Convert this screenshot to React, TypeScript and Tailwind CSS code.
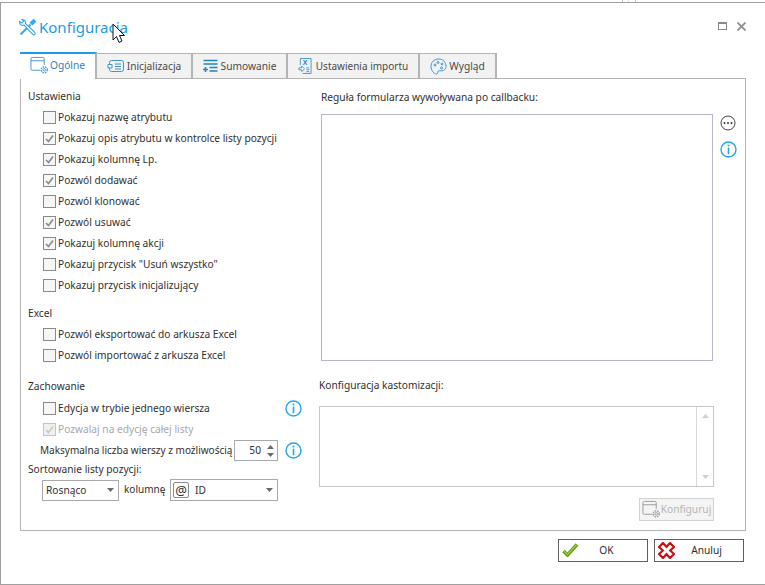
import React from "react";

const font = { fontFamily: '"Noto Sans", sans-serif' };

function Check({ checked, disabled }: { checked?: boolean; disabled?: boolean }) {
  return (
    <span className={`w-[13px] h-[13px] border shrink-0 flex items-center justify-center ${disabled ? "border-[#c4c4c4] bg-[#f0f0f0]" : "border-[#8a8a8a] bg-[#f6f6f6]"}`}>
      {checked && (
        <svg width="11" height="11" viewBox="0 0 11 11">
          <path d="M2 6 L4.5 8.5 L9 2.5" fill="none" stroke={disabled ? "#c8c8c8" : "#8c8c8c"} strokeWidth="1.7" />
        </svg>
      )}
    </span>
  );
}

function Row({ label, checked, disabled }: { label: string; checked?: boolean; disabled?: boolean }) {
  return (
    <div className={`h-[21px] flex items-center gap-[2px] pl-[15px] whitespace-nowrap ${disabled ? "text-[#a8a8a8]" : "text-[#303030]"}`}>
      <Check checked={checked} disabled={disabled} />
      <span>{label}</span>
    </div>
  );
}

function Info({ className = "" }: { className?: string }) {
  return (
    <svg width="17" height="17" viewBox="0 0 17 17" className={`shrink-0 ${className}`}>
      <circle cx="8.5" cy="8.5" r="7.5" fill="none" stroke="#22a7ee" strokeWidth="1.4" />
      <rect x="7.6" y="3.6" width="1.8" height="1.8" fill="#22a7ee" />
      <rect x="7.7" y="6.6" width="1.6" height="6.6" fill="#22a7ee" />
    </svg>
  );
}

function Caret({ color = "#6b6b6b" }: { color?: string }) {
  return (
    <svg width="7" height="4" viewBox="0 0 7 4">
      <path d="M0 0H7L3.5 4Z" fill={color} />
    </svg>
  );
}

function GearWindow({ color = "#4b93c8" }: { color?: string }) {
  return (
    <svg width="19" height="19" viewBox="0 0 20 19" fill="none" stroke={color} strokeWidth="1">
      <path d="M11 14.5H2.5a1.5 1.5 0 0 1-1.5-1.5V2.5A1.5 1.5 0 0 1 2.5 1h11A1.5 1.5 0 0 1 15 2.5V9" />
      <path d="M1 4.5H15" />
      <circle cx="15" cy="14" r="1.3" />
      <circle cx="15" cy="14" r="3.2" strokeDasharray="1.6 1" strokeWidth="1.4" />
    </svg>
  );
}

function Tab({ icon, label, active, w, gap = "gap-[2px]", text = "" }: { icon: React.ReactNode; label: string; active?: boolean; w: string; gap?: string; text?: string }) {
  return (
    <div
      className={`${w} ${gap} flex items-center justify-center border-r-2 ${
        active
          ? "h-[27px] bg-white border-t-2 border-t-[#1e9be8] border-r-[#b4b4b4] -mb-[1px] text-[#3a7fb0] z-10 pb-[2px]"
          : "h-[25px] bg-[#f2f2f2] border-t border-t-[#b4b4b4] text-[#4a4a4a] border-r-[#b4b4b4]"
      }`}
    >
      {icon}
      <span className={text}>{label}</span>
    </div>
  );
}

export default function App() {
  return (
    <div className="w-[765px] h-[585px] bg-white relative overflow-hidden text-[10.2px] leading-[15px]" style={font}>
      <div className="h-[3px] border-b border-[#a0a0a0] relative">
        <div className="absolute left-[622px] top-0 h-[2px] w-[14px] border-x border-[#c4c4c4]" />
        <div className="absolute left-[628px] top-0 h-[2px] w-[1px] bg-[#e0e0e0]" />
      </div>
      <div className="h-[582px] border-l border-b border-[#a0a0a0] pl-[19px] flex flex-col">
        <div className="h-[49px] flex items-center pb-[1px]">
          <svg width="19" height="19" viewBox="0 0 19 19" fill="none" stroke="#3aa9ec" strokeWidth="1.1" className="-ml-[2px]">
            <path d="M2.500 16.500 L12.500 6.500" strokeWidth="2.200" />
            <path d="M15.500 1.500 L17.500 3.500 L14.500 6.800 L12.200 4.800 Z" fill="#3aa9ec" />
            <path d="M1.500 3.500 a3.200 3.200 0 0 0 4.500 3.500 L14.800 16.300 a1.400 1.400 0 0 0 2-2 L7.500 5.500 a3.200 3.200 0 0 0-3.500-4 L5.500 3.300 L4 5 Z" fill="#fff" />
          </svg>
          <span className="text-[15px] leading-[24px] text-[#1d9be6] ml-[2px]">Konfiguracja</span>
          <div className="ml-auto mr-[19px] -mt-[2px] flex items-center gap-[10px]">
            <span className="w-[9px] h-[8px] border border-[#8a8a8a] border-t-2 block" />
            <svg width="9" height="9" viewBox="0 0 9 9"><path d="M0.5 0.5L8.5 8.5M8.5 0.5L0.5 8.5" stroke="#8a8a8a" strokeWidth="1.6" /></svg>
          </div>
        </div>
        <div className="flex items-end h-[26px] relative">
          <Tab w="w-[77px]" gap="gap-[1px]" active label="Ogólne" icon={<GearWindow />} />
          <Tab w="w-[96px]" label="Inicjalizacja" icon={
            <svg width="18" height="14" viewBox="0 0 18 14" fill="none" stroke="#3f94cc"><rect x="2.500" y="1.500" width="14" height="11" rx="2" /><path d="M8 5H14M8 7.500H14M8 10H14M1 5.500H5V9H1Z" fill="#fff" /></svg>
          } />
          <Tab w="w-[95px]" gap="gap-[3px]" label="Sumowanie" icon={
            <svg width="15" height="14" viewBox="0 0 15 14" fill="none" stroke="#1f86c8" strokeWidth="1.6"><path d="M0.500 1.500H14.500M0.500 5H14.500M6.500 8.500H14.500M6.500 12H14.500M0 10.500H5M2.500 8V13" /></svg>
          } />
          <Tab w="w-[132px]" gap="gap-[4px]" text="text-[10px]" label="Ustawienia importu" icon={
            <svg width="14" height="18" viewBox="0 0 15 18" fill="none" stroke="#3f94cc"><path d="M2.500 8V1H14V17H5" /><path d="M1 11H4V9L7 12L4 15V13H1Z" fill="#fff" /><path d="M9 11H12M9 13H12M9 15H12" /><text x="5" y="7.500" fontSize="7.500" fontWeight="700" fill="#2f7fb8" stroke="none" fontFamily="Liberation Sans">X</text></svg>
          } />
          <Tab w="w-[77px]" label="Wygląd" icon={
            <svg width="17" height="17" viewBox="0 0 17 17" fill="none" stroke="#3f94cc"><path d="M8.500 1C4 1 1 4.200 1 8.500c0 4 3 7.500 5.500 7.500 1.500 0 1-2 1.800-3 1-1 3 .6 5.200-.6C15.400 11.400 16 10 16 8.500 16 4 13 1 8.500 1Z" /><circle cx="5" cy="7" r="1" /><circle cx="8" cy="4.500" r="1" /><circle cx="12" cy="6" r="1" /><circle cx="11.500" cy="10" r="1" /></svg>
          } />
        </div>
        <div className="w-[726px] h-[453px] border border-[#b4b4b4] flex">
          <div className="w-[299px] pl-[7px] pr-[18px] pt-[10px] shrink-0">
            <div className="h-[17px] text-[#303030]">Ustawienia</div>
            <div className="mt-[1px]">
              <Row label="Pokazuj nazwę atrybutu" />
              <Row label="Pokazuj opis atrybutu w kontrolce listy pozycji" checked />
              <Row label="Pokazuj kolumnę Lp." checked />
              <Row label="Pozwól dodawać" checked />
              <Row label="Pozwól klonować" />
              <Row label="Pozwól usuwać" checked />
              <Row label="Pokazuj kolumnę akcji" checked />
              <Row label={'Pokazuj przycisk "Usuń wszystko"'} />
              <Row label="Pokazuj przycisk inicjalizujący" />
            </div>
            <div className="mt-[10px] h-[17px] text-[#303030]">Excel</div>
            <div className="mt-[1px]">
              <Row label="Pozwól eksportować do arkusza Excel" />
              <Row label="Pozwól importować z arkusza Excel" />
            </div>
            <div className="mt-[13px] h-[17px] text-[#303030]">Zachowanie</div>
            <div className="mt-[2px] flex items-center justify-between">
              <Row label="Edycja w trybie jednego wiersza" />
              <Info />
            </div>
            <Row label="Pozwalaj na edycję całej listy" checked disabled />
            <div className="h-[23px] -mt-[1px] flex items-center pl-[12px] text-[#303030] whitespace-nowrap">
              <span className="w-[194px] text-[10px]">Maksymalna liczba wierszy z możliwością</span>
              <div className="w-[44px] h-[21px] border border-[#a9a9a9] flex items-center justify-end shrink-0">
                <span className="mr-[6px]">50</span>
                <div className="flex flex-col gap-[4px] mr-[3px]">
                  <div className="rotate-180 leading-[0]"><Caret /></div>
                  <div className="leading-[0]"><Caret /></div>
                </div>
              </div>
              <Info className="ml-auto" />
            </div>
            <div className="h-[17px] text-[#303030]">Sortowanie listy pozycji:</div>
            <div className="flex items-center pl-[14px] text-[#303030]">
              <div className="w-[77px] h-[21px] border border-[#a9a9a9] flex items-center justify-between px-[3px]">
                <span>Rosnąco</span>
                <span className="mr-[1px]"><Caret /></span>
              </div>
              <span className="ml-[5px] mb-[2px] w-[46px] text-[10px]">kolumnę</span>
              <div className="w-[108px] h-[22px] border border-[#a9a9a9] flex items-center px-[2px]">
                <span className="w-[16px] h-[16px] border border-[#8c8c8c] rounded-[2px] flex items-center justify-center text-[13px]">@</span>
                <span className="ml-[6px]">ID</span>
                <span className="ml-auto mr-[2px]"><Caret /></span>
              </div>
            </div>
          </div>
          <div className="flex-1 pt-[11px] text-[#303030]">
            <div className="h-[17px] pl-[1px]">Reguła formularza wywoływana po callbacku:</div>
            <div className="flex mt-[7px]">
              <div className="w-[392px] h-[247px] border border-[#b7b7c8] ml-[1px]" />
              <div className="ml-[7px] pt-[1px] flex flex-col gap-[10px]">
                <svg width="16" height="16" viewBox="0 0 16 16">
                  <circle cx="8" cy="8" r="7" fill="none" stroke="#444" strokeWidth="1" />
                  <circle cx="4.500" cy="8" r="1" fill="#333" /><circle cx="8" cy="8" r="1" fill="#333" /><circle cx="11.500" cy="8" r="1" fill="#333" />
                </svg>
                <Info />
              </div>
            </div>
            <div className="h-[17px] mt-[17px] -ml-[1px]">Konfiguracja kastomizacji:</div>
            <div className="w-[395px] h-[81px] mt-[11px] -ml-[1px] border border-[#c6c6c6] flex justify-end">
              <div className="w-[17px] border-l border-[#d8d8d8] flex flex-col items-center justify-between py-[7px]">
                <div className="rotate-180 leading-[0]"><Caret color="#d0d0d0" /></div>
                <div className="leading-[0]"><Caret color="#d0d0d0" /></div>
              </div>
            </div>
            <div className="w-[395px] -ml-[1px] mt-[11px] flex justify-end">
              <div className="w-[75px] h-[23px] border border-[#d2d2d2] bg-[#f4f4f4] text-[#b4b4b4] flex items-center justify-center">
                <GearWindow color="#9a9a9a" />
                <span>Konfiguruj</span>
              </div>
            </div>
          </div>
        </div>
        <div className="flex justify-end gap-[6px] mt-[8px] w-[726px]">
          <div className="w-[90px] h-[23px] border border-[#5f5f5f] flex items-center relative text-[#303030]">
            <svg width="17" height="15" viewBox="0 0 17 15" className="absolute left-[3px] top-[2px]"><path d="M1.500 9 L5.500 13 L15 2.500" fill="none" stroke="#6aa512" strokeWidth="3.600" /><path d="M1.800 9 L5.500 12.500 L14.500 2.800" fill="none" stroke="#b6d77a" strokeWidth="1" /></svg>
            <span className="w-full text-center pl-[7px]">OK</span>
          </div>
          <div className="w-[90px] h-[23px] border border-[#5f5f5f] flex items-center relative text-[#303030] mr-[2px]">
            <svg width="17" height="17" viewBox="0 0 17 17" className="absolute left-[3px] top-[2px]"><path d="M5 1 L8.500 4.800 L12 1 L16 5 L12.200 8.500 L16 12 L12 16 L8.500 12.200 L5 16 L1 12 L4.800 8.500 L1 5 Z" fill="#fff" stroke="#cc1010" strokeWidth="2.200" /></svg>
            <span className="w-full text-center pl-[15px]">Anuluj</span>
          </div>
        </div>
      </div>
      <svg width="14" height="22" viewBox="0 0 14 22" className="absolute left-[112px] top-[23px]">
        <path d="M1 1 V17 L4.500 13.500 L7 19.500 L10 18 L7.500 12.500 H12.500 Z" fill="#fff" stroke="#111" strokeWidth="1" />
      </svg>
    </div>
  );
}
